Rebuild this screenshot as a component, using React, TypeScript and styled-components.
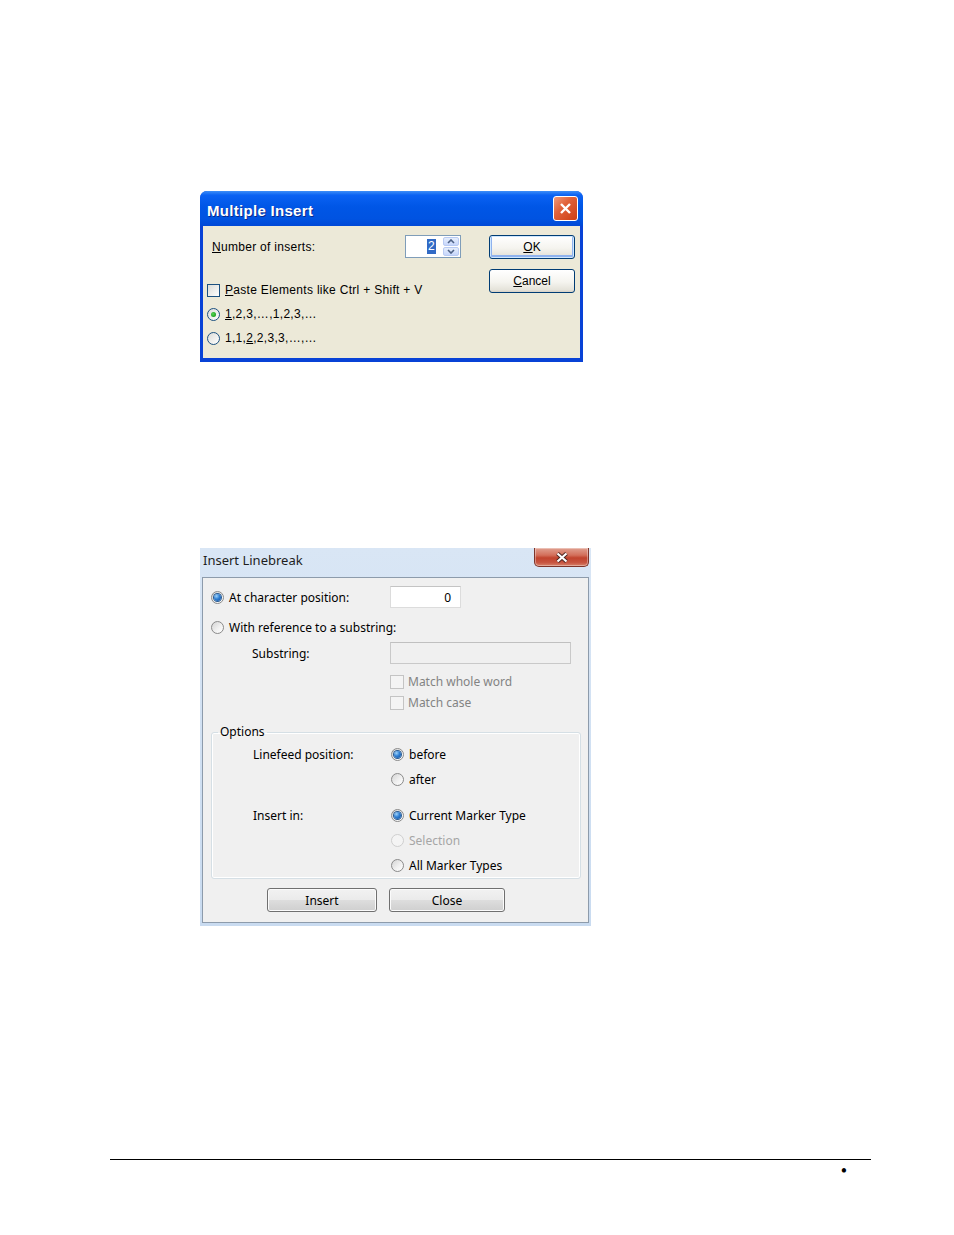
import styled, { createGlobalStyle, css } from "styled-components";

const GlobalStyle = createGlobalStyle`
	html, body {
		margin: 0;
		padding: 0;
		background: #ffffff;
	}
	* {
		box-sizing: border-box;
	}
`;

const Page = styled.div`
	display: flex;
	flex-direction: column;
	width: 954px;
	height: 1235px;
	padding-top: 191px;
	overflow: hidden;
`;

/* ---------- Windows XP style dialog ---------- */

const XpWindow = styled.div`
	margin-left: 200px;
	width: 383px;
	border-radius: 7px 7px 0 0;
	background: #0842d6;
	padding-bottom: 4px;
	font-family: "Liberation Sans", Arial, sans-serif;
	font-size: 12px;
	letter-spacing: 0.3px;
	color: #000;
`;

const XpTitleBar = styled.div`
	display: flex;
	align-items: center;
	justify-content: space-between;
	height: 35px;
	padding: 0 5px 0 7px;
	border-radius: 7px 7px 0 0;
	background: linear-gradient(
		180deg,
		#3d8ef7 0%,
		#0a62f3 12%,
		#0056e6 45%,
		#0053e1 80%,
		#0048d6 100%
	);
`;

const XpTitle = styled.span`
	margin-top: 3px;
	font-weight: bold;
	font-size: 15px;
	letter-spacing: 0.3px;
	color: #ffffff;
	text-shadow: 1px 1px 0 #0b2a8c;
`;

const XpCloseButton = styled.span`
	display: flex;
	align-items: center;
	justify-content: center;
	width: 25px;
	height: 25px;
	border: 1px solid #ffffff;
	border-radius: 3px;
	background: linear-gradient(135deg, #f09a7a 0%, #e1623a 40%, #cc3e14 100%);
`;

const XpBody = styled.div`
	display: flex;
	gap: 28px;
	height: 132px;
	margin: 0 3px;
	padding: 9px 4px 0 4px;
	background: #ece9d8;
`;

const XpLeftColumn = styled.div`
	display: flex;
	flex-direction: column;
	width: 254px;
`;

const XpTopRow = styled.div`
	display: flex;
	align-items: center;
	justify-content: space-between;
	height: 23px;
	padding-left: 5px;
	margin-bottom: 20px;
`;

const XpSpinBox = styled.div`
	display: flex;
	width: 56px;
	height: 23px;
	border: 1px solid #7f9db9;
	background: #ffffff;
`;

const XpSpinValue = styled.div`
	flex: 1;
	display: flex;
	align-items: center;
	justify-content: flex-end;
	padding-right: 6px;

	span {
		background: #316ac5;
		color: #ffffff;
		padding: 0 1px;
		line-height: 15px;
	}
`;

const XpSpinButtons = styled.div`
	display: flex;
	flex-direction: column;
	gap: 1px;
	width: 18px;
	padding: 1px;
`;

const XpSpinButton = styled.div`
	flex: 1;
	display: flex;
	align-items: center;
	justify-content: center;
	border: 1px solid #b9cbf3;
	border-radius: 2px;
	background: linear-gradient(180deg, #e6eefc 0%, #c6d6fb 100%);
`;

const XpOptionRow = styled.label`
	display: flex;
	align-items: center;
	gap: 5px;
	height: 24px;
`;

const XpCheckbox = styled.span`
	width: 13px;
	height: 13px;
	border: 1px solid #1c5180;
	background: linear-gradient(135deg, #dcdcd7 0%, #ffffff 100%);
`;

const XpRadio = styled.span<{ $checked?: boolean }>`
	display: flex;
	align-items: center;
	justify-content: center;
	width: 13px;
	height: 13px;
	border: 1px solid #1c5180;
	border-radius: 50%;
	background: linear-gradient(135deg, #dcdcd7 0%, #ffffff 100%);

	${p =>
		p.$checked &&
		css`
			&::after {
				content: "";
				width: 5px;
				height: 5px;
				border-radius: 50%;
				background: radial-gradient(circle at 40% 40%, #55d655 0%, #21a121 70%);
			}
		`}
`;

const XpButtonColumn = styled.div`
	display: flex;
	flex-direction: column;
	gap: 10px;
`;

const XpButton = styled.button<{ $default?: boolean }>`
	width: 86px;
	height: 24px;
	padding: 0;
	border: 1px solid #003c74;
	border-radius: 3px;
	background: linear-gradient(180deg, #ffffff 0%, #f5f4ef 55%, #e5e3da 90%, #d6d0c5 100%);
	font: inherit;
	color: #000;
	box-shadow: ${p =>
		p.$default ? "inset 0 0 0 1px #cee7ff, inset 0 -1px 0 2px #8fb2ee" : "none"};
`;

/* ---------- Windows 7 style dialog ---------- */

const Win7Window = styled.div`
	margin: 186px 0 0 200px;
	width: 391px;
	padding: 0 2px 3px;
	background: linear-gradient(180deg, #d9e6f5 0%, #c9dbf0 100%);
	font-family: "Noto Sans", "Open Sans", sans-serif;
	font-size: 12px;
	color: #000;
`;

const Win7TitleBar = styled.div`
	display: flex;
	justify-content: space-between;
	height: 29px;
	padding-left: 1px;
`;

const Win7Title = styled.span`
	align-self: center;
	font-size: 13px;
	color: #1e1e1e;
	margin-top: -6px;
`;

const Win7CloseButton = styled.span`
	display: flex;
	align-items: center;
	justify-content: center;
	width: 55px;
	height: 19px;
	border: 1px solid #7d342a;
	border-top: none;
	border-radius: 0 0 5px 5px;
	background: linear-gradient(
		180deg,
		#e0a090 0%,
		#d36f5a 40%,
		#c1432d 55%,
		#c75440 80%,
		#d7826a 100%
	);
	box-shadow: inset 0 0 0 1px rgba(255, 255, 255, 0.35);
`;

const Win7Panel = styled.div`
	border: 1px solid #8d9bab;
	background: #f0f0f0;
	padding: 8px 7px 10px 8px;
`;

const FormRow = styled.div<{ $h: number; $mt?: number }>`
	display: grid;
	grid-template-columns: 179px 1fr;
	align-items: center;
	height: ${p => p.$h}px;
	margin-top: ${p => p.$mt ?? 0}px;
	white-space: nowrap;
`;

const RadioLabel = styled.label<{ $wide?: boolean }>`
	display: flex;
	align-items: center;
	gap: 5px;
	grid-column: ${p => (p.$wide ? "1 / -1" : "auto")};
`;

const FieldLabel = styled.span`
	padding-left: 41px;
`;

const Win7Text = styled.span<{ $disabled?: "soft" | "faint" }>`
	color: ${p =>
		p.$disabled === "soft" ? "#838383" : p.$disabled === "faint" ? "#a6a6a6" : "#000"};
`;

const Win7Radio = styled.span<{ $checked?: boolean; $disabled?: boolean }>`
	display: flex;
	align-items: center;
	justify-content: center;
	width: 13px;
	height: 13px;
	border-radius: 50%;
	border: 1px solid ${p => (p.$disabled ? "#cfcfcf" : "#8a8a8a")};
	background: ${p =>
		p.$disabled
			? "#f4f4f4"
			: "linear-gradient(135deg, #d4d4d4 0%, #f2f2f2 60%, #ffffff 100%)"};

	${p =>
		p.$checked &&
		css`
			&::after {
				content: "";
				width: 7px;
				height: 7px;
				border-radius: 50%;
				background: radial-gradient(circle at 35% 30%, #9fd3fa 0%, #2f7fd3 45%, #0f4d99 100%);
				box-shadow: 0 0 0 1px #2a5b91;
			}
		`}
`;

const Win7Checkbox = styled.span<{ $disabled?: boolean }>`
	width: 14px;
	height: 14px;
	border: 1px solid ${p => (p.$disabled ? "#c4c4c4" : "#8f8f8f")};
	background: ${p =>
		p.$disabled ? "#f4f4f4" : "linear-gradient(135deg, #dedede 0%, #ffffff 100%)"};
`;

const CheckLabel = styled.label`
	display: flex;
	align-items: center;
	gap: 4px;
`;

const Win7Input = styled.div<{ $w: number; $disabled?: boolean }>`
	display: flex;
	align-items: center;
	justify-content: flex-end;
	width: ${p => p.$w}px;
	height: 22px;
	padding-right: 9px;
	border: 1px solid ${p => (p.$disabled ? "#c9c9c9" : "#dcdcdc")};
	border-top-color: ${p => (p.$disabled ? "#c0c0c0" : "#c4c4c4")};
	background: ${p => (p.$disabled ? "#f0f0f0" : "#ffffff")};
`;

const OptionsGroup = styled.fieldset`
	margin: 12px 0 0 0;
	padding: 3px 0 0 0;
	border: 1px solid #d5dfe5;
	border-radius: 3px;
	box-shadow: inset 0 0 0 1px #ffffff;

	legend {
		margin-left: 6px;
		padding: 0 2px;
		line-height: 14px;
	}
`;

const Win7ButtonRow = styled.div`
	display: flex;
	gap: 12px;
	margin-top: 9px;
	padding-left: 56px;
`;

const Win7Button = styled.button<{ $w: number }>`
	width: ${p => p.$w}px;
	height: 24px;
	padding: 0;
	border: 1px solid #707070;
	border-radius: 3px;
	background: linear-gradient(180deg, #f2f2f2 0%, #ebebeb 48%, #dddddd 52%, #cfcfcf 100%);
	box-shadow: inset 0 0 0 1px #fbfbfb;
	font: inherit;
	color: #000;
`;

/* ---------- footer ---------- */

const Footer = styled.footer`
	display: flex;
	justify-content: flex-end;
	height: 76px;
	margin: auto 83px 0 110px;
	padding: 1px 24px 0 0;
	border-top: 1px solid #000000;
	font-family: "Liberation Serif", serif;
	font-size: 18px;
	line-height: 20px;
`;

function ChevronUp() {
	return (
		<svg width="8" height="5" viewBox="0 0 8 5">
			<path d="M1 4 L4 1 L7 4" fill="none" stroke="#4d6185" strokeWidth="1.6" />
		</svg>
	);
}

function ChevronDown() {
	return (
		<svg width="8" height="5" viewBox="0 0 8 5">
			<path d="M1 1 L4 4 L7 1" fill="none" stroke="#4d6185" strokeWidth="1.6" />
		</svg>
	);
}

function MultipleInsertDialog() {
	return (
		<XpWindow>
			<XpTitleBar>
				<XpTitle>Multiple Insert</XpTitle>
				<XpCloseButton>
					<svg width="13" height="13" viewBox="0 0 13 13">
						<path d="M2 2 L11 11 M11 2 L2 11" stroke="#ffffff" strokeWidth="2.4" />
					</svg>
				</XpCloseButton>
			</XpTitleBar>
			<XpBody>
				<XpLeftColumn>
					<XpTopRow>
						<span>
							<u>N</u>umber of inserts:
						</span>
						<XpSpinBox>
							<XpSpinValue>
								<span>2</span>
							</XpSpinValue>
							<XpSpinButtons>
								<XpSpinButton>
									<ChevronUp />
								</XpSpinButton>
								<XpSpinButton>
									<ChevronDown />
								</XpSpinButton>
							</XpSpinButtons>
						</XpSpinBox>
					</XpTopRow>
					<XpOptionRow>
						<XpCheckbox />
						<span>
							<u>P</u>aste Elements like Ctrl + Shift + V
						</span>
					</XpOptionRow>
					<XpOptionRow>
						<XpRadio $checked />
						<span>
							<u>1</u>,2,3,…,1,2,3,…
						</span>
					</XpOptionRow>
					<XpOptionRow>
						<XpRadio />
						<span>
							1,1,<u>2</u>,2,3,3,…,…
						</span>
					</XpOptionRow>
				</XpLeftColumn>
				<XpButtonColumn>
					<XpButton $default>
						<u>O</u>K
					</XpButton>
					<XpButton>
						<u>C</u>ancel
					</XpButton>
				</XpButtonColumn>
			</XpBody>
		</XpWindow>
	);
}

function InsertLinebreakDialog() {
	return (
		<Win7Window>
			<Win7TitleBar>
				<Win7Title>Insert Linebreak</Win7Title>
				<Win7CloseButton>
					<svg width="14" height="11" viewBox="0 0 14 11">
						<path d="M2.5 1.5 L11.5 9.5 M11.5 1.5 L2.5 9.5" stroke="#4a2520" strokeWidth="4" />
						<path d="M2.5 1.5 L11.5 9.5 M11.5 1.5 L2.5 9.5" stroke="#ffffff" strokeWidth="2.2" />
					</svg>
				</Win7CloseButton>
			</Win7TitleBar>
			<Win7Panel>
				<FormRow $h={22}>
					<RadioLabel>
						<Win7Radio $checked />
						<span>At character position:</span>
					</RadioLabel>
					<Win7Input $w={71}>0</Win7Input>
				</FormRow>
				<FormRow $h={22} $mt={8}>
					<RadioLabel $wide>
						<Win7Radio />
						<span>With reference to a substring:</span>
					</RadioLabel>
				</FormRow>
				<FormRow $h={22} $mt={4}>
					<FieldLabel>Substring:</FieldLabel>
					<Win7Input $w={181} $disabled />
				</FormRow>
				<FormRow $h={21} $mt={7}>
					<span />
					<CheckLabel>
						<Win7Checkbox $disabled />
						<Win7Text $disabled="soft">Match whole word</Win7Text>
					</CheckLabel>
				</FormRow>
				<FormRow $h={21}>
					<span />
					<CheckLabel>
						<Win7Checkbox $disabled />
						<Win7Text $disabled="soft">Match case</Win7Text>
					</CheckLabel>
				</FormRow>
				<OptionsGroup>
					<legend>Options</legend>
					<FormRow $h={25}>
						<FieldLabel>Linefeed position:</FieldLabel>
						<RadioLabel>
							<Win7Radio $checked />
							<span>before</span>
						</RadioLabel>
					</FormRow>
					<FormRow $h={25}>
						<span />
						<RadioLabel>
							<Win7Radio />
							<span>after</span>
						</RadioLabel>
					</FormRow>
					<FormRow $h={25} $mt={11}>
						<FieldLabel>Insert in:</FieldLabel>
						<RadioLabel>
							<Win7Radio $checked />
							<span>Current Marker Type</span>
						</RadioLabel>
					</FormRow>
					<FormRow $h={25}>
						<span />
						<RadioLabel>
							<Win7Radio $disabled />
							<Win7Text $disabled="faint">Selection</Win7Text>
						</RadioLabel>
					</FormRow>
					<FormRow $h={25}>
						<span />
						<RadioLabel>
							<Win7Radio />
							<span>All Marker Types</span>
						</RadioLabel>
					</FormRow>
				</OptionsGroup>
				<Win7ButtonRow>
					<Win7Button $w={110}>Insert</Win7Button>
					<Win7Button $w={116}>Close</Win7Button>
				</Win7ButtonRow>
			</Win7Panel>
		</Win7Window>
	);
}

export default function App() {
	return (
		<>
			<GlobalStyle />
			<Page>
				<MultipleInsertDialog />
				<InsertLinebreakDialog />
				<Footer>•</Footer>
			</Page>
		</>
	);
}
